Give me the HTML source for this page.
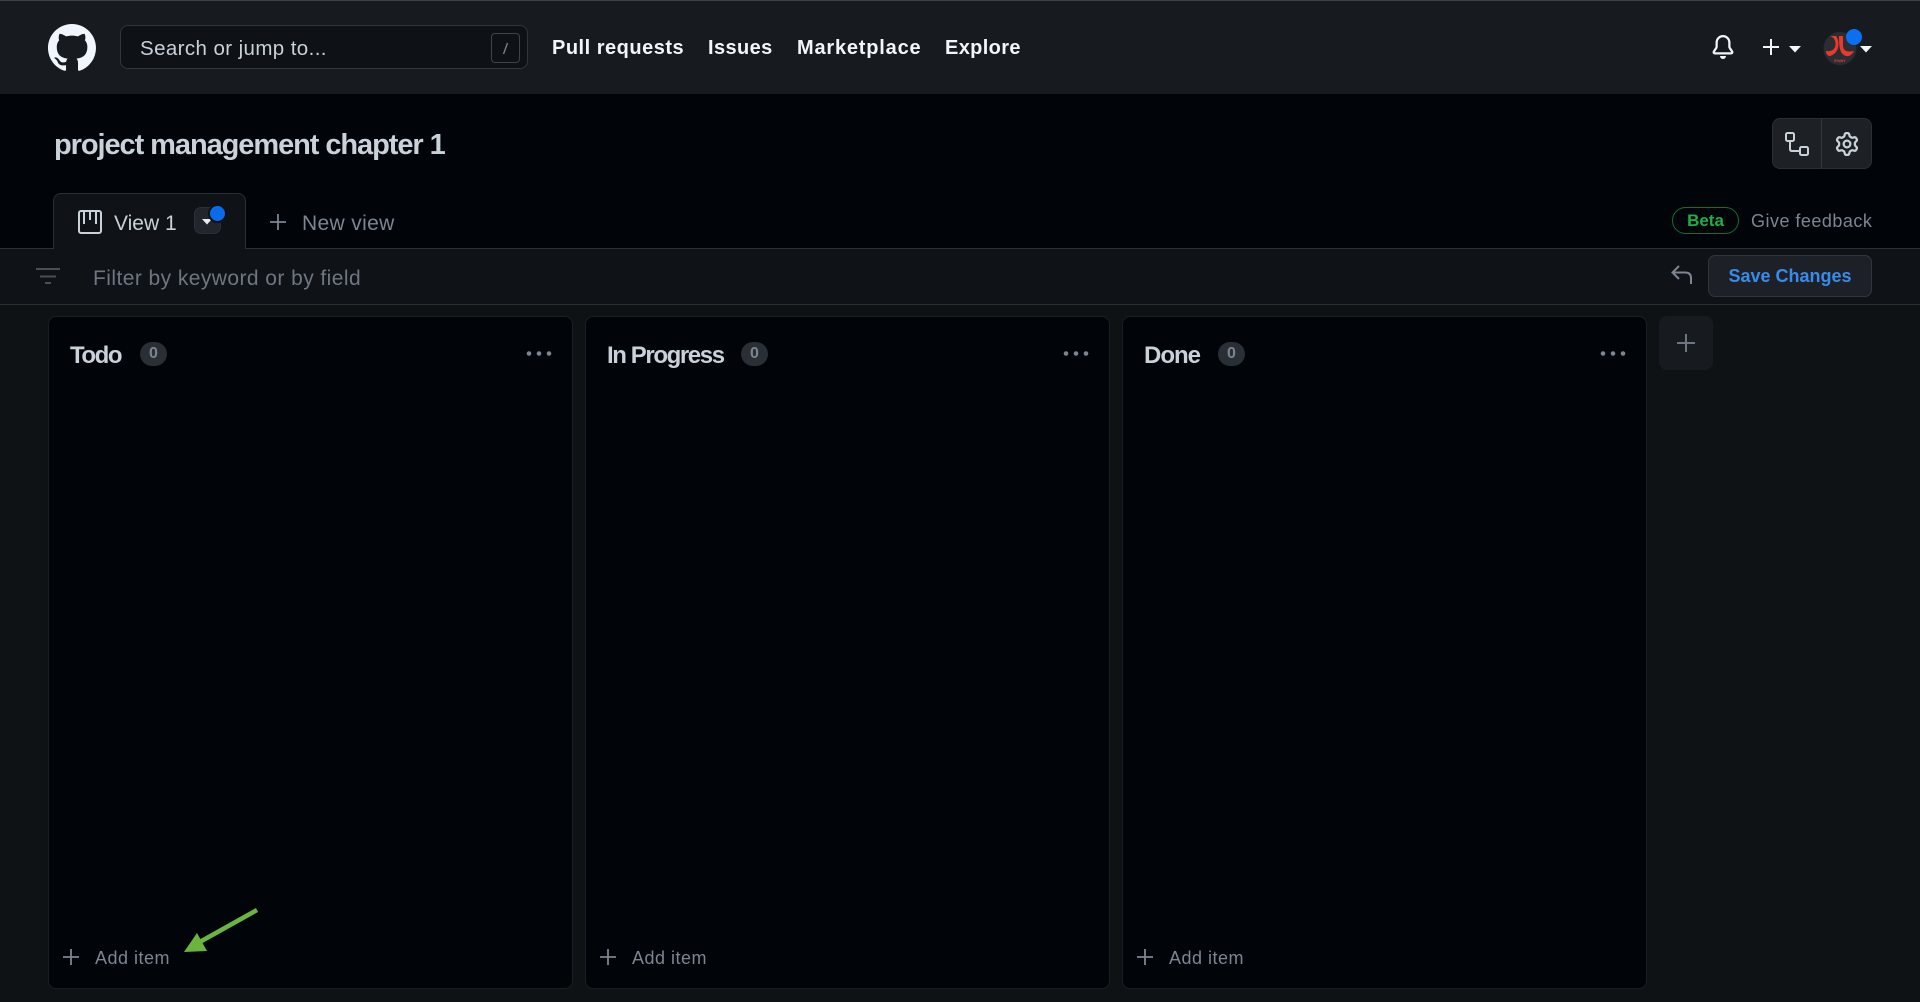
<!DOCTYPE html>
<html><head><meta charset="utf-8"><title>project management chapter 1</title>
<style>
html,body{margin:0;padding:0;width:1920px;height:1002px;overflow:hidden;background:#0f1215;font-family:"Liberation Sans",sans-serif}
.a{position:absolute;box-sizing:border-box}
.t{position:absolute;white-space:nowrap;line-height:1}
svg{position:absolute;overflow:visible}
.col{position:absolute;top:316px;width:525px;height:673px;background:#010409;border:1px solid #1b1f24;border-radius:8px;box-sizing:border-box}
.cnt{position:absolute;top:342px;width:27px;height:24px;border-radius:12px;background:#2a2f35;color:#7d8590;font-size:16px;font-weight:bold;text-align:center;line-height:24px}
.h{position:absolute;top:344px;font-size:24px;font-weight:bold;color:#c9d1d9;line-height:1;letter-spacing:-1px;white-space:nowrap}
.add{position:absolute;top:949px;font-size:18px;color:#7d8590;line-height:1;white-space:nowrap;letter-spacing:.5px}
.nav{position:absolute;top:38px;font-size:20px;font-weight:bold;color:#f0f6fc;line-height:1;white-space:nowrap}
</style></head><body>
<div class="a" style="left:0;top:0;width:1920px;height:94px;background:#171b1f;border-top:1px solid #3f4245"></div>
<svg style="left:48px;top:24px" width="48" height="48" viewBox="0 0 16 16"><path fill="#f0f6fc" d="M8 0C3.58 0 0 3.58 0 8c0 3.54 2.29 6.53 5.47 7.59.4.07.55-.17.55-.38 0-.19-.01-.82-.01-1.49-2.01.37-2.53-.49-2.69-.94-.09-.23-.48-.94-.82-1.13-.28-.15-.68-.52-.01-.53.63-.01 1.08.58 1.23.82.72 1.21 1.87.87 2.33.66.07-.52.28-.87.51-1.07-1.78-.2-3.64-.89-3.64-3.95 0-.87.31-1.59.82-2.15-.08-.2-.36-1.02.08-2.12 0 0 .67-.21 2.2.82.64-.18 1.32-.27 2-.27.68 0 1.36.09 2 .27 1.53-1.04 2.2-.82 2.2-.82.44 1.1.16 1.92.08 2.12.51.56.82 1.27.82 2.15 0 3.07-1.87 3.75-3.65 3.95.29.25.54.73.54 1.48 0 1.07-.01 1.93-.01 2.2 0 .21.15.46.55.38A8.013 8.013 0 0016 8c0-4.42-3.58-8-8-8z"/></svg>
<div class="a" style="left:120px;top:25px;width:408px;height:44px;background:#0e1115;border:1px solid #30363d;border-radius:8px"></div>
<div class="t" style="left:140px;top:39px;font-size:20.5px;color:#c9d1d9;letter-spacing:.4px">Search or jump to...</div>
<div class="a" style="left:491px;top:33px;width:29px;height:30px;border:1px solid #3d444c;border-radius:4px"></div>
<svg style="left:491px;top:33px" width="29" height="30"><path d="M16.5 10L12.5 21" stroke="#7d8590" stroke-width="1.3"/></svg>
<div class="nav" style="left:552px;letter-spacing:.5px">Pull requests</div>
<div class="nav" style="left:708px;letter-spacing:.4px">Issues</div>
<div class="nav" style="left:797px;letter-spacing:.8px">Marketplace</div>
<div class="nav" style="left:945px;letter-spacing:.35px">Explore</div>
<svg style="left:1711px;top:35px" width="24" height="24" viewBox="0 0 16 16"><path fill="#f0f6fc" d="M8 16a2 2 0 001.985-1.75c.017-.137-.097-.25-.235-.25h-3.5c-.138 0-.252.113-.235.25A2 2 0 008 16z"/><path fill="#f0f6fc" d="M8 1.5A3.5 3.5 0 004.5 5v2.947c0 .346-.102.683-.294.97l-1.703 2.556a.018.018 0 00-.003.01l.001.006c0 .002.002.004.004.006a.017.017 0 00.006.004l.007.001h10.964l.007-.001a.018.018 0 00.006-.004.016.016 0 00.004-.006l.001-.007a.017.017 0 00-.003-.01l-1.703-2.554a1.75 1.75 0 01-.294-.97V5A3.5 3.5 0 008 1.5zM3 5a5 5 0 0110 0v2.947c0 .05.015.098.042.139l1.703 2.555A1.518 1.518 0 0113.482 13H2.518a1.518 1.518 0 01-1.263-2.36l1.703-2.554A.25.25 0 003 7.947V5z"/></svg>
<svg style="left:1762px;top:38px" width="18" height="18"><path d="M9 1V17M1 9H17" stroke="#f0f6fc" stroke-width="2"/></svg>
<svg style="left:1789px;top:46px" width="12" height="7"><path d="M0 0H12L6 6.5Z" fill="#f0f6fc"/></svg>
<svg style="left:1823px;top:32px" width="34" height="34"><circle cx="17" cy="16.500" r="16.500" fill="#2a2d33"/><path d="M3 19C9 20 13 17 12.500 11 12 7 10 5 7 4L13 4C17 9 17 21 7 24 4 24 3 21 3 19Z" fill="#e8392a"/><path d="M20 4L20 13C20 20 25 20 31 19 30 22 26 25 23 24 17 22 16 16 16 4Z" fill="#e8392a"/><text x="17" y="30" font-size="4" font-weight="bold" fill="#e8392a" text-anchor="middle" font-family="Liberation Sans">EWAY</text></svg>
<div class="a" style="left:1846px;top:29px;width:16px;height:16px;border-radius:50%;background:#0a6ff0"></div>
<svg style="left:1860px;top:46px" width="12" height="7"><path d="M0 0H12L6 6.5Z" fill="#f0f6fc"/></svg>

<div class="a" style="left:0;top:94px;width:1920px;height:154px;background:#010409"></div>
<div class="t" style="left:54px;top:131px;font-size:29px;font-weight:bold;color:#c9d1d9;letter-spacing:-1.07px">project management chapter 1</div>
<div class="a" style="left:1772px;top:118px;width:100px;height:51px;background:#1d2126;border:1px solid #2b3036;border-radius:8px"></div>
<div class="a" style="left:1821px;top:118px;width:1px;height:51px;background:#30363d"></div>
<svg style="left:1784px;top:131px" width="26" height="26"><g fill="none" stroke="#c9d1d9" stroke-width="2"><rect x="2" y="2" width="8" height="8" rx="1.500"/><rect x="16" y="16" width="8" height="8" rx="1.500"/><path d="M6 10V18Q6 20 8 20H16"/></g></svg>
<svg style="left:1835px;top:132px" width="24" height="24" viewBox="0 0 16 16"><path fill="#c9d1d9" d="M8 0a8.2 8.2 0 0 1 .701.031C9.444.095 9.99.645 10.16 1.29l.288 1.107c.018.066.079.158.212.224.231.114.454.243.668.386.123.082.233.09.299.071l1.103-.303c.644-.176 1.392.021 1.82.63.27.385.506.792.704 1.218.315.675.111 1.422-.364 1.891l-.814.806c-.049.048-.098.147-.088.294.016.257.016.515 0 .772-.01.147.038.246.088.294l.814.806c.475.469.679 1.216.364 1.891a7.977 7.977 0 0 1-.704 1.217c-.428.61-1.176.807-1.82.63l-1.102-.302c-.067-.019-.177-.011-.3.071a5.909 5.909 0 0 1-.668.386c-.133.066-.194.158-.211.224l-.29 1.106c-.168.646-.715 1.196-1.458 1.26a8.006 8.006 0 0 1-1.402 0c-.743-.064-1.289-.614-1.458-1.26l-.289-1.106c-.018-.066-.079-.158-.212-.224a5.738 5.738 0 0 1-.668-.386c-.123-.082-.233-.09-.299-.071l-1.103.303c-.644.176-1.392-.021-1.82-.63a8.12 8.12 0 0 1-.704-1.218c-.315-.675-.111-1.422.363-1.891l.815-.806c.05-.048.098-.147.088-.294a6.214 6.214 0 0 1 0-.772c.01-.147-.038-.246-.088-.294l-.815-.806C.635 6.045.431 5.298.746 4.623a7.92 7.92 0 0 1 .704-1.217c.428-.61 1.176-.807 1.82-.63l1.102.302c.067.019.177.011.3-.071.214-.143.437-.272.668-.386.133-.066.194-.158.211-.224l.29-1.106C6.009.645 6.556.095 7.299.03 7.53.01 7.764 0 8 0Zm-.571 1.525c-.036.003-.108.036-.137.146l-.289 1.105c-.147.561-.549.967-.998 1.189-.173.086-.34.183-.5.29-.417.278-.97.423-1.529.27l-1.103-.303c-.109-.03-.175.016-.195.045-.22.312-.412.644-.573.99-.014.031-.021.11.059.19l.815.806c.411.406.562.957.53 1.456a4.709 4.709 0 0 0 0 .582c.032.499-.119 1.05-.53 1.456l-.815.806c-.081.08-.073.159-.059.19.162.346.353.677.573.989.02.03.085.076.195.046l1.102-.303c.56-.153 1.113-.008 1.53.27.161.107.328.204.501.29.447.222.85.629.997 1.189l.289 1.105c.029.109.101.143.137.146a6.6 6.6 0 0 0 1.142 0c.036-.003.108-.036.137-.146l.289-1.105c.147-.561.549-.967.998-1.189.173-.086.34-.183.5-.29.417-.278.97-.423 1.529-.27l1.103.303c.109.029.175-.016.195-.045.22-.313.411-.644.573-.99.014-.031.021-.11-.059-.19l-.815-.806c-.411-.406-.562-.957-.53-1.456a4.709 4.709 0 0 0 0-.582c-.032-.499.119-1.05.53-1.456l.815-.806c.081-.08.073-.159.059-.19a6.464 6.464 0 0 0-.573-.989c-.02-.03-.085-.076-.195-.046l-1.102.303c-.56.153-1.113.008-1.53-.27a4.44 4.44 0 0 0-.501-.29c-.447-.222-.85-.629-.997-1.189l-.289-1.105c-.029-.11-.101-.143-.137-.146a6.6 6.6 0 0 0-1.142 0ZM11 8a3 3 0 1 1-6 0 3 3 0 0 1 6 0ZM9.500 8a1.500 1.500 0 1 0-3.001.001A1.500 1.500 0 0 0 9.500 8Z"/></svg>

<div class="a" style="left:1672px;top:207px;width:67px;height:27px;border:1px solid #11702f;border-radius:14px;color:#1fae4a;font-size:17px;font-weight:bold;text-align:center;line-height:25px">Beta</div>
<div class="t" style="left:1751px;top:212px;font-size:18px;color:#7d8590;letter-spacing:.48px">Give feedback</div>

<div class="a" style="left:0;top:248px;width:1920px;height:57px;background:#0f1216;border-top:1px solid #2b3036;border-bottom:1px solid #2b3036"></div>
<div class="a" style="left:53px;top:193px;width:193px;height:56px;background:#0f1216;border:1px solid #2b3036;border-bottom:none;border-radius:8px 8px 0 0"></div>
<svg style="left:78px;top:210px" width="24" height="24"><rect x="1" y="1" width="22" height="22" rx="2" fill="none" stroke="#c9d1d9" stroke-width="2"/><path d="M6 2V14M12 2V10M18 2V14" stroke="#c9d1d9" stroke-width="2" fill="none"/></svg>
<div class="t" style="left:114px;top:213px;font-size:21px;color:#c9d1d9;letter-spacing:0">View 1</div>
<div class="a" style="left:194px;top:207px;width:27px;height:27px;background:#22262c;border:1px solid #2b3036;border-radius:7px"></div>
<svg style="left:202px;top:219px" width="10" height="6"><path d="M0 0H10L5 5.500Z" fill="#e6edf3"/></svg>
<div class="a" style="left:208px;top:204px;width:19px;height:19px;border-radius:50%;background:#0a6bea;border:2px solid #0d1116"></div>
<svg style="left:269px;top:213px" width="18" height="18"><path d="M9 1V17M1 9H17" stroke="#7d8590" stroke-width="1.800"/></svg>
<div class="t" style="left:302px;top:213px;font-size:21px;color:#7d8590;letter-spacing:.35px">New view</div>

<svg style="left:36px;top:268px" width="24" height="16"><path d="M0 1H24M4 8.500H20M9 15H15" stroke="#484f58" stroke-width="2"/></svg>
<div class="t" style="left:93px;top:268px;font-size:21px;color:#6e7681;letter-spacing:.43px">Filter by keyword or by field</div>
<svg style="left:1671px;top:265px" width="21" height="20"><path d="M8 1L1.500 7.500 8 14M1.500 7.500H14Q20 7.500 20 13V19" fill="none" stroke="#7d8590" stroke-width="2"/></svg>
<div class="a" style="left:1708px;top:255px;width:164px;height:42px;background:#1d2127;border:1px solid #30363d;border-radius:7px;color:#388bea;font-size:18px;font-weight:bold;text-align:center;line-height:40px">Save Changes</div>

<div class="col" style="left:48px"></div>
<div class="col" style="left:585px"></div>
<div class="col" style="left:1122px"></div>

<div class="h" style="left:70px;letter-spacing:-1.45px">Todo</div>
<div class="cnt" style="left:140px">0</div>
<div class="h" style="left:607px;letter-spacing:-1.4px">In Progress</div>
<div class="cnt" style="left:741px">0</div>
<div class="h" style="left:1144px">Done</div>
<div class="cnt" style="left:1218px">0</div>

<svg style="left:526px;top:351px" width="26" height="5"><g fill="#7d8590"><circle cx="3" cy="2.500" r="2.300"/><circle cx="13" cy="2.500" r="2.300"/><circle cx="23" cy="2.500" r="2.300"/></g></svg>
<svg style="left:1063px;top:351px" width="26" height="5"><g fill="#7d8590"><circle cx="3" cy="2.500" r="2.300"/><circle cx="13" cy="2.500" r="2.300"/><circle cx="23" cy="2.500" r="2.300"/></g></svg>
<svg style="left:1600px;top:351px" width="26" height="5"><g fill="#7d8590"><circle cx="3" cy="2.500" r="2.300"/><circle cx="13" cy="2.500" r="2.300"/><circle cx="23" cy="2.500" r="2.300"/></g></svg>

<div class="a" style="left:1659px;top:316px;width:54px;height:54px;background:#171b1f;border-radius:8px"></div>
<svg style="left:1677px;top:334px" width="18" height="18"><path d="M9 0V18M0 9H18" stroke="#6e7681" stroke-width="2"/></svg>

<svg style="left:62px;top:948px" width="18" height="18"><path d="M9 1V17M1 9H17" stroke="#7d8590" stroke-width="1.800"/></svg>
<div class="add" style="left:95px">Add item</div>
<svg style="left:599px;top:948px" width="18" height="18"><path d="M9 1V17M1 9H17" stroke="#7d8590" stroke-width="1.800"/></svg>
<div class="add" style="left:632px">Add item</div>
<svg style="left:1136px;top:948px" width="18" height="18"><path d="M9 1V17M1 9H17" stroke="#7d8590" stroke-width="1.800"/></svg>
<div class="add" style="left:1169px">Add item</div>

<svg style="left:0;top:880px" width="400" height="122"><path d="M257 30L198 63" stroke="#6bb53f" stroke-width="4.500" fill="none"/><path d="M184 72L197 53 207 71Z" fill="#6bb53f"/></svg>
</body></html>
